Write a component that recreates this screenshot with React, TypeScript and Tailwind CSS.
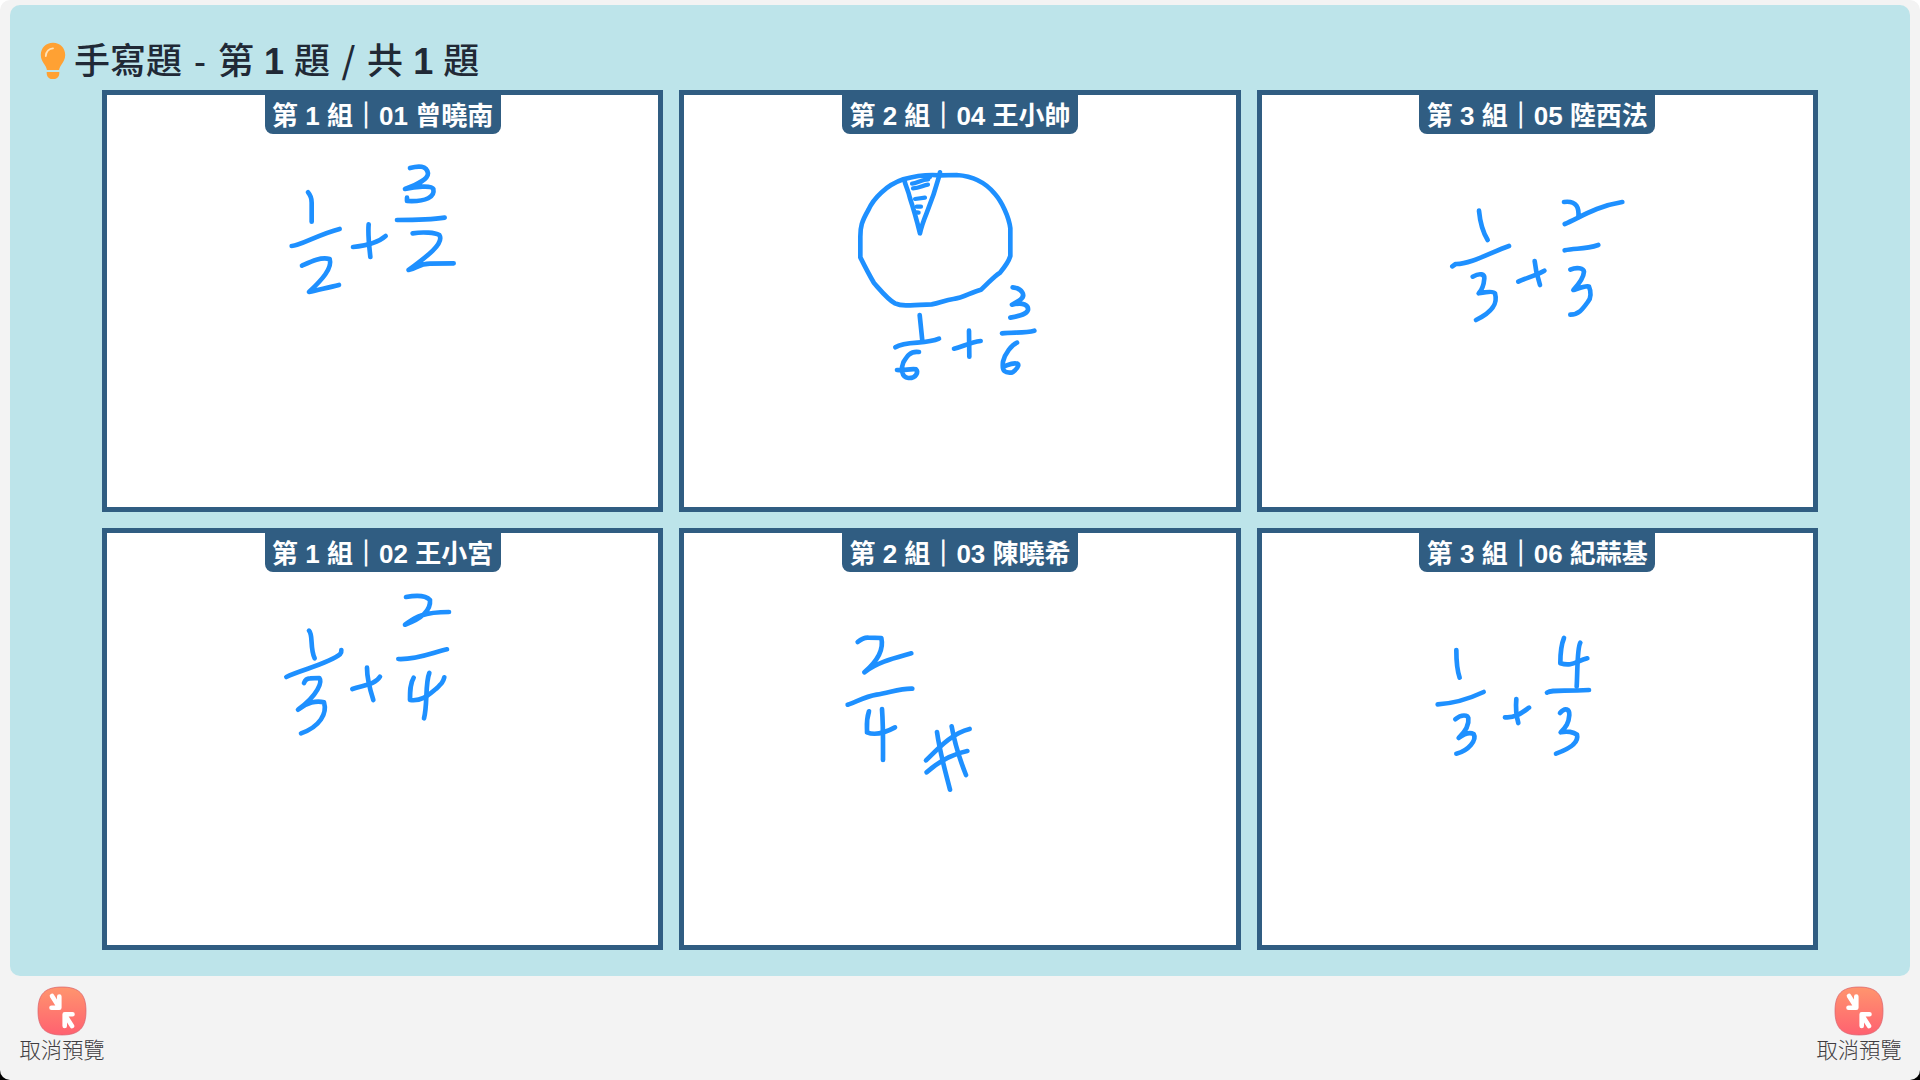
const INK = '#1e90ff';

type Answer = {
  group: number;
  name: string;
  x: number;
  y: number;
  strokes: string[];
  thin?: string[];
};

// Stroke coordinates are in thirds of a pixel, measured from (x, y) of the card's canvas.
const answers: Answer[] = [
  {
    group: 1,
    name: '01 曾曉南',
    x: 153,
    y: 45,
    strokes: [
      'M144 157Q155 170 155 188L155 245',
      'M95 318C120 318 175 283 239 267',
      'M126 377C150 366 180 350 209 357C218 385 185 420 147 456C175 449 205 443 237 435',
      'M279 321C312 318 350 312 377 288',
      'M326 253C323 285 328 320 331 351',
      'M450 84C475 77 500 76 504 100C504 120 470 134 435 147C465 140 515 135 520 147C525 170 500 186 441 183L441 173',
      'M411 240C460 240 515 239 554 233',
      'M458 280C490 275 525 278 538 285C554 310 500 350 446 390C470 386 475 371 510 371L581 370',
    ],
  },
  {
    group: 2,
    name: '04 王小帥',
    x: 156,
    y: 55,
    strokes: [
      'M300 67L297 80C270 180 250 200 240 250C230 210 215 160 210 145C203 115 197 110 193 90',
      'M300 76C265 73 225 78 190 88C140 105 100 145 85 180C65 215 61 230 61 260L61 322Q85 370 102 399C125 425 145 450 165 460C185 469 205 467 275 463C300 459 315 450 340 447C370 444 390 428 423 419C445 400 460 380 480 368C495 350 505 338 511 318L511 235C507 200 485 155 465 132C435 95 400 78 350 75L300 76',
      'M239 495L247 572',
      'M166 592C200 570 255 585 297 566',
      'M237 606C210 602 200 620 190 637C183 653 183 682 205 684C230 685 235 665 228 658C215 655 190 662 171 660',
      'M342 596C370 589 390 577 422 573',
      'M387 542L388 620',
      'M518 412C545 415 560 435 540 450L516 464C550 456 566 465 564 480C560 492 545 497 511 503',
      'M486 550C520 546 555 550 583 542',
      'M531 578C515 585 495 610 489 635C485 665 495 670 518 667C538 650 540 640 525 640C510 640 505 645 489 650',
    ],
    thin: [
      'M216 101C230 101 245 88 265 88',
      'M219 115C240 114 250 105 264 104',
      'M225 147L255 143',
      'M230 170L243 170',
      'M230 187L236 188',
      'M240 78L270 81',
    ],
  },
  {
    group: 3,
    name: '05 陸西法',
    x: 158.33,
    y: 75,
    strokes: [
      'M176 122C180 165 190 190 202 210',
      'M96 289L106 282C150 283 210 248 266 228',
      'M157 320C180 307 193 313 192 325C190 350 185 360 175 370C195 366 220 363 224 370C231 395 225 422 167 450',
      'M294 335C315 325 350 315 372 302',
      'M343 273L348 305L359 345',
      'M431 96C470 91 477 115 474 143M433 162C475 145 525 109 606 96',
      'M433 241C465 233 490 240 534 225',
      'M450 299C470 290 490 295 491 305C490 325 475 343 459 360C475 355 500 345 506 350C513 365 512 385 503 395C485 420 475 434 450 434',
    ],
  },
  {
    group: 1,
    name: '02 王小宮',
    x: 153,
    y: 37,
    strokes: [
      'M147 182C160 195 149 233 164 265',
      'M79 321C120 300 210 280 240 253Q245 248 244 240',
      'M132 339Q137 325 150 325L178 324C187 335 175 375 114 419C140 397 170 391 192 397C202 430 180 470 123 490',
      'M277 357C310 345 345 345 360 320',
      'M321 293C321 330 332 365 340 390',
      'M438 81C460 77 495 73 510 90C513 120 485 147 435 164C460 147 480 126 567 126',
      'M415 267C470 270 525 245 561 238',
      'M461 323C450 340 450 365 450 390C490 395 510 370 530 355C545 340 550 335 553 322',
      'M508 309C495 340 503 405 492 445',
    ],
  },
  {
    group: 2,
    name: '03 陳曉希',
    x: 136,
    y: 77,
    strokes: [
      'M113 96Q130 82 145 83L184 84C190 110 182 145 133 187C175 155 225 144 274 130',
      'M83 284C110 275 135 260 170 254C210 248 240 235 277 236',
      'M147 304C137 335 142 355 141 367C160 375 190 371 225 352',
      'M186 297C190 350 189 400 189 450',
      'M318 451C355 415 395 370 449 357',
      'M320 487C355 455 400 432 442 423',
      'M351 366C360 430 375 480 390 539',
      'M395 349C405 405 420 450 438 495',
    ],
  },
  {
    group: 3,
    name: '06 紀蒜基',
    x: 148.33,
    y: 77,
    strokes: [
      'M138 120C138 155 140 180 148 203',
      'M82 283C120 281 175 267 220 246',
      'M135 328C155 311 172 316 174 324C177 345 165 365 145 384C165 369 180 367 190 372C200 390 175 422 138 431',
      'M284 322C315 325 335 308 356 293',
      'M318 267C315 300 320 325 324 339',
      'M461 84C450 110 450 135 450 160C485 170 495 155 531 145',
      'M510 98C500 115 502 180 499 230',
      'M410 248C425 238 450 244 536 240',
      'M449 309C465 290 478 298 477 315C475 340 468 350 451 367C470 362 490 366 500 374C505 393 490 412 437 431',
    ],
  },
];

function AnswerCard({ answer }: { answer: Answer }) {
  return (
    <div className="relative border-5 border-[#305d82] bg-white">
      <svg className="block h-full w-full" aria-hidden="true">
        <g
          transform={`translate(${answer.x} ${answer.y}) scale(0.33333)`}
          fill="none"
          stroke={INK}
          strokeWidth={14}
          strokeLinecap="round"
          strokeLinejoin="round"
        >
          {answer.strokes.map((d) => (
            <path key={d} d={d} />
          ))}
          {answer.thin?.map((d) => (
            <path key={d} d={d} strokeWidth={12.5} />
          ))}
        </g>
      </svg>
      <div className="absolute -top-px left-1/2 h-10 w-[236px] -translate-x-1/2 rounded-b-lg bg-[#305d82] text-center text-[26px] leading-[44px] font-bold whitespace-nowrap text-white">
        第 {answer.group} 組<span className="[-webkit-text-stroke:0.9px_white]">｜</span>
        {answer.name}
      </div>
    </div>
  );
}

function CancelPreview() {
  return (
    <button className="flex w-[86px] flex-col items-center">
      <svg width="50" height="50" viewBox="0 0 50 50" aria-hidden="true">
        <defs>
          <linearGradient id="coral" x1="0" y1="0" x2="0" y2="1">
            <stop offset="0" stopColor="#ff956e" />
            <stop offset="1" stopColor="#ff6170" />
          </linearGradient>
        </defs>
        <path
          d="M25 1C42 1 49 8 49 25S42 49 25 49S1 42 1 25S8 1 25 1Z"
          fill="url(#coral)"
          stroke="#d9606c"
          strokeWidth="0.7"
        />
        <g fill="none" stroke="#fff" strokeWidth="4.6" strokeLinecap="round" strokeLinejoin="round">
          <path d="M15 10L22 21M22.3 10.500V21.700H14.500" />
          <path d="M35 40L28 29M27.700 40V28.300H35.500" />
        </g>
      </svg>
      <span className="text-[21.3px] leading-[30px] font-light whitespace-nowrap text-[#403c40]">取消預覽</span>
    </button>
  );
}

export default function App() {
  return (
    <div className="h-[1080px] w-[1920px] bg-linear-to-b from-white from-50% to-black to-50% font-['Liberation_Sans','Noto_Sans_CJK_TC',sans-serif]">
      <div className="flex h-full flex-col rounded-[10px] bg-[#f3f3f3] px-2.5 pt-[5px]">
        <main className="flex h-[971px] flex-col rounded-[10px] bg-[#bde4ea] px-[92px]">
          <h1 className="-ml-[62px] flex h-[85px] items-end pb-[2px] text-[36px] leading-[52px] font-medium text-[#212936]">
            <svg className="mr-[8px] mb-[8px]" width="26" height="38" viewBox="0 0 26 38" aria-hidden="true">
              <path
                d="M13 .8C5.8.8.8 6.200.8 13c0 4 1.700 6.600 3.500 9.200 1.400 2 2.200 3.500 2.600 5.700h12.200c.4-2.200 1.200-3.700 2.600-5.700 1.800-2.600 3.500-5.200 3.500-9.200C25.200 6.200 20.200.8 13 .8ZM6.700 29.900v1.200c0 3.500 2.200 6 5.200 6h2.200c3 0 5.200-2.500 5.200-6v-1.200Z"
                fill="#ffa133"
              />
              <path d="M5.800 14C5.800 9.500 9 6.500 13 6.300" fill="none" stroke="#ffe1b5" strokeWidth="1.8" strokeLinecap="round" />
            </svg>
            <span className="whitespace-pre">
              手寫題 <span className="inline-block w-4 text-center">-</span> 第 <b>1</b> 題{' '}
              <span className="inline-block w-[17px] text-center font-['Noto_Sans_CJK_TC',sans-serif] leading-none">/</span> 共{' '}
              <b>1</b> 題
            </span>
          </h1>
          <section className="grid h-[860px] grid-cols-3 grid-rows-2 gap-4">
            {answers.map((answer) => (
              <AnswerCard key={answer.name} answer={answer} />
            ))}
          </section>
        </main>
        <footer className="flex justify-between pt-[9.500px] pr-2 pl-[9px]">
          <CancelPreview />
          <CancelPreview />
        </footer>
      </div>
    </div>
  );
}
